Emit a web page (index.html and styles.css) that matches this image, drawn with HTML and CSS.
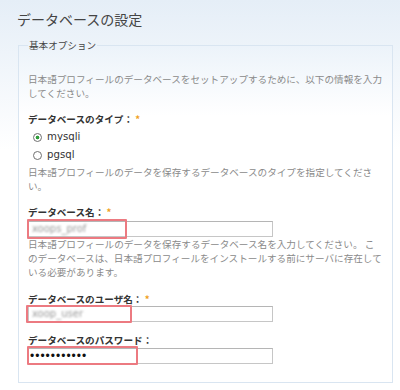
FILE: index.html
```html
<html>
    <head>
        <meta charset="UTF-8">
        <link rel="stylesheet" href="styles.css">
    </head>

    <body>
        <h2 class="page-title">データベースの設定</h2>

        <fieldset class="options">
            <legend>基本オプション</legend>

            <p class="desc intro">日本語プロフィールのデータベースをセットアップするために、以下の情報を入力してください。</p>

            <div class="label type-label">データベースのタイプ： <span class="req">*</span></div>
            <div class="radios">
                <div class="radio-row"><span class="radio checked"></span>mysqli</div>
                <div class="radio-row"><span class="radio"></span>pgsql</div>
            </div>
            <p class="desc">日本語プロフィールのデータを保存するデータベースのタイプを指定してください。</p>

            <div class="label name-label">データベース名： <span class="req">*</span></div>
            <div class="text-input name-input">
                <span class="blurred">xoops_prof</span>
                <span class="mark mark-name"></span>
            </div>
            <p class="desc">日本語プロフィールのデータを保存するデータベース名を入力してください。 このデータベースは、日本語プロフィールをインストールする前にサーバに存在して<br>いる必要があります。</p>

            <div class="label user-label">データベースのユーザ名： <span class="req">*</span></div>
            <div class="text-input">
                <span class="blurred">xoop_user</span>
                <span class="mark mark-user"></span>
            </div>

            <div class="label pass-label">データベースのパスワード：</div>
            <div class="text-input pass-input">
                <span class="dots">•••••••••••</span>
                <span class="mark mark-pass"></span>
            </div>
        </fieldset>
    </body>
</html>
```

FILE: styles.css
```css
html {
    background: #fff linear-gradient(#e5eef7, #fff 150px) no-repeat;
    min-height: 100%;
}

body {
    margin: 0;
    font-family: "Noto Sans CJK JP", sans-serif;
    color: #333;
}

.page-title {
    margin: 0;
    padding: 9px 0 0 17px;
    font-size: 14px;
    line-height: 20px;
    font-weight: normal;
    color: #444;
}

.options {
    margin: 9px 0 0 18px;
    padding: 20px 8px 18px 9px;
    width: 355.6px;
    border: 1px solid #d9e5f1;
    background: linear-gradient(#ecf3fa, #fff 70px);
    font-size: 9.6px;
    line-height: 14px;
}

.options legend {
    padding: 0 1px;
    margin-left: 0;
    color: #444;
    font-size: 9.6px;
    line-height: 14px;
}

.desc {
    margin: 0;
    color: #8a8a8a;
}

.label {
    font-weight: bold;
    color: #333;
}

.req {
    color: #f0a020;
}

.type-label {
    margin-top: 12px;
}

.radios {
    margin-top: 2px;
    margin-bottom: 1px;
}

.radio-row {
    display: flex;
    align-items: center;
    height: 18px;
    font-family: "DejaVu Sans", sans-serif;
    font-size: 10.2px;
    color: #333;
}

.radio {
    width: 7px;
    height: 7px;
    margin: 0 5px 0 5px;
    border: 1px solid #707070;
    border-radius: 50%;
    background: #fff;
}

.radio.checked {
    background: radial-gradient(circle, #2f9e3a 0, #2f9e3a 1.5px, #fff 2.2px);
}

.name-label {
    margin-top: 12px;
}

.user-label {
    margin-top: 13px;
}

.pass-label {
    margin-top: 11px;
}

.text-input {
    position: relative;
    width: 245px;
    height: 16px;
    box-sizing: border-box;
    border: 1px solid #c6c6c6;
    border-top-color: #b5b5b5;
    background: #fff;
}

.name-input {
    margin-top: 2px;
}

.pass-input {
    margin-top: 1px;
}

.blurred {
    display: block;
    padding-left: 3px;
    font-family: "DejaVu Sans", sans-serif;
    font-size: 10px;
    line-height: 14px;
    color: #9a9a9a;
    filter: blur(1.3px);
}

.dots {
    display: block;
    padding-left: 1px;
    font-family: "Liberation Sans", sans-serif;
    font-size: 12px;
    line-height: 14px;
    letter-spacing: 1px;
    color: #111;
}

.mark {
    position: absolute;
    border: 2px solid #ec7a81;
    border-radius: 1px;
}

.mark-name {
    left: -2px;
    top: -3px;
    width: 96px;
    height: 16px;
}

.mark-user {
    left: -3px;
    top: -2px;
    width: 102px;
    height: 14px;
}

.mark-pass {
    left: -2px;
    top: -3px;
    width: 107px;
    height: 15px;
}
```
